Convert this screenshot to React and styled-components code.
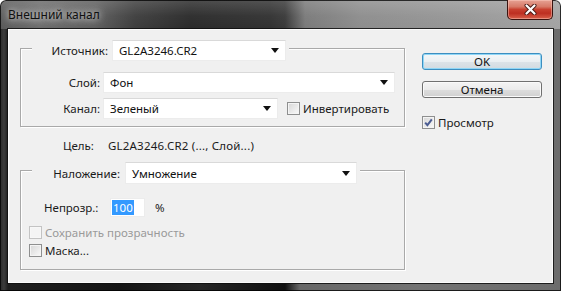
import React from 'react';
import styled, { createGlobalStyle } from 'styled-components';

const Global = createGlobalStyle`
  html, body { margin: 0; padding: 0; background: #ffffff; }
  body { font-family: "Noto Sans", "Open Sans", sans-serif; }
  #root { width: 561px; height: 291px; }
`;

const Window = styled.div`
  width: 561px;
  height: 291px;
  box-sizing: border-box;
  display: flex;
  flex-direction: column;
  border-radius: 6px 6px 0 0;
  overflow: hidden;
  background:
    linear-gradient(90deg, #2a2a2a 0px, #3c3c3c 4px, #1e1e1e 8px, #141414 120px, #262626 200px, #101010 285px, #686868 300px, #737373 420px, #6c6c6c 561px) bottom / 100% 262px no-repeat,
    linear-gradient(180deg, rgba(255,255,255,0.16) 0px, rgba(255,255,255,0.03) 16px, rgba(0,0,0,0) 29px),
    linear-gradient(90deg, #5a5a5a 0px, #6c6c6c 40px, #5e5e5e 95px, #3e3e3e 135px, #2b2b2b 190px, #323232 270px, #3a3a3a 285px, #7a7a7a 305px, #8d8d8d 360px, #979797 460px, #a3a3a3 561px);
  box-shadow: inset 0 0 0 1px rgba(0, 0, 0, 0.75);
`;

const TitleBar = styled.div`
  flex: none;
  height: 29px;
  box-sizing: border-box;
  padding: 0 8px;
  display: flex;
  align-items: flex-start;
  justify-content: space-between;
`;

const Title = styled.span`
  margin-top: 7px;
  font-size: 12px;
  line-height: 15px;
  color: #101010;
  text-shadow: 0 0 6px rgba(255, 255, 255, 0.85), 0 0 12px rgba(255, 255, 255, 0.6);
`;

const CloseButton = styled.div`
  width: 46px;
  height: 20px;
  box-sizing: border-box;
  border: 1px solid #3a1410;
  border-top: none;
  border-radius: 0 0 5px 5px;
  background: linear-gradient(180deg, #e6a294 0%, #d77a68 35%, #c8402f 50%, #bd2f22 70%, #d9604a 100%);
  box-shadow: inset 0 0 0 1px rgba(255, 210, 200, 0.45);
  display: flex;
  align-items: center;
  justify-content: center;
`;

const Client = styled.div`
  flex: none;
  margin: 0 8px;
  width: 545px;
  height: 254px;
  box-sizing: border-box;
  background: #f0f0f0;
  box-shadow: 0 0 0 1px rgba(15, 15, 15, 0.85), inset 1px 1px 0 #fbfbfb, inset -1px -1px 0 #fbfbfb;
  display: flex;
  align-items: flex-start;
  color: #1a1a1a;
  font-size: 11.5px;
`;

const LeftColumn = styled.div`
  flex: none;
  width: 397px;
  box-sizing: border-box;
  padding: 19px 0 0 12px;
  display: flex;
  flex-direction: column;
`;

const RightColumn = styled.div`
  flex: none;
  width: 120px;
  margin-left: 17px;
  padding-top: 24px;
  display: flex;
  flex-direction: column;
`;

const Group = styled.div`
  width: 385px;
  height: ${(p) => p.$h}px;
  margin-top: ${(p) => p.$mt || 0}px;
  box-sizing: border-box;
  border: 1px solid #a9a9a9;
  box-shadow: inset 1px 1px 0 #ffffff, 1px 1px 0 #ffffff;
  display: flex;
  flex-direction: column;
`;

const HeaderRow = styled.div`
  display: flex;
  align-items: stretch;
  margin-top: -9px;
  margin-left: 11px;
  align-self: flex-start;
`;

const HeaderLabel = styled.div`
  width: ${(p) => p.$w}px;
  box-sizing: border-box;
  padding-right: ${(p) => p.$pr}px;
  background: #f0f0f0;
  display: flex;
  align-items: center;
  justify-content: flex-end;
  white-space: nowrap;
`;

const HeaderGap = styled.div`
  width: 3px;
  background: #f0f0f0;
`;

const Row = styled.div`
  display: flex;
  align-items: center;
  margin-top: ${(p) => p.$mt || 0}px;
  margin-left: ${(p) => p.$ml || 0}px;
  height: ${(p) => p.$h || 16}px;
  white-space: nowrap;
`;

const Label = styled.div`
  width: ${(p) => p.$w}px;
  text-align: ${(p) => p.$align || 'right'};
  margin-right: ${(p) => p.$gap || 0}px;
  flex: none;
  white-space: nowrap;
`;

const Value = styled.span`
  letter-spacing: 0.2px;
`;

const SelectBox = styled.div`
  width: ${(p) => p.$w}px;
  height: ${(p) => p.$h || 21}px;
  box-sizing: border-box;
  background: #ffffff;
  border: 1px solid #ececec;
  border-top-color: #d9d9d9;
  display: flex;
  align-items: center;
  justify-content: space-between;
  padding: 0 6px 0 6px;
  flex: none;
  color: #111;
`;

const Arrow = () => (
  <svg width="8" height="5" viewBox="0 0 8 5">
    <path d="M0 0 H8 L4 5 Z" fill="#111" />
  </svg>
);

const Select = ({ w, h, children }) => (
  <SelectBox $w={w} $h={h}>
    <span>{children}</span>
    <Arrow />
  </SelectBox>
);

const CheckBoxBox = styled.div`
  width: 13px;
  height: 13px;
  box-sizing: border-box;
  flex: none;
  border: 1px solid ${(p) => (p.$disabled ? '#c3c3c3' : '#8e8f8f')};
  background: ${(p) =>
    p.$disabled
      ? '#f4f4f4'
      : 'linear-gradient(135deg, #d6d6d6 0%, #e8e8e8 50%, #fafafa 100%)'};
  box-shadow: inset 0 0 0 1px ${(p) => (p.$disabled ? '#f7f7f7' : '#f4f4f4')};
  display: flex;
  align-items: center;
  justify-content: center;
  margin-right: 3px;
`;

const Check = ({ checked, disabled }) => (
  <CheckBoxBox $disabled={disabled}>
    {checked && (
      <svg width="11" height="11" viewBox="0 0 11 11">
        <path d="M2.2 5.6 L4.4 8.2 L8.8 2.4" fill="none" stroke="#4a5c92" strokeWidth="2" />
      </svg>
    )}
  </CheckBoxBox>
);

const CheckText = styled.span`
  color: ${(p) => (p.$disabled ? '#9a9a9a' : '#1a1a1a')};
`;

const Input = styled.div`
  width: 35px;
  height: 19px;
  box-sizing: border-box;
  background: #ffffff;
  border: 1px solid #ececec;
  display: flex;
  align-items: center;
  padding-left: 1px;
  flex: none;
`;

const Selected = styled.span`
  background: #3399ff;
  color: #ffffff;
  padding: 0 1px;
  line-height: 15px;
`;

const Percent = styled.span`
  margin-left: 10px;
`;

const Button = styled.div`
  width: 120px;
  height: 17px;
  box-sizing: border-box;
  margin-top: ${(p) => p.$mt || 0}px;
  border: 1px solid ${(p) => (p.$default ? '#3c8ec0' : '#707070')};
  border-radius: 3px;
  background: ${(p) =>
    p.$default
      ? 'linear-gradient(180deg, #f4f7f9 0%, #eaeff2 50%, #dce3e8 52%, #d2dbe1 100%)'
      : 'linear-gradient(180deg, #f4f4f4 0%, #ebebeb 50%, #dddddd 52%, #d0d0d0 100%)'};
  box-shadow: inset 0 0 0 1px ${(p) => (p.$default ? '#8fd6f6' : '#fafafa')};
  display: flex;
  align-items: center;
  justify-content: center;
  color: #111;
  line-height: 15px;
`;

export default function App() {
  return (
    <>
      <Global />
      <Window>
        <TitleBar>
          <Title>Внешний канал</Title>
          <CloseButton>
            <svg width="13" height="11" viewBox="0 0 13 11">
              <path d="M2.5 1.5 L10.5 9.5 M10.5 1.5 L2.5 9.5" stroke="#4a1a14" strokeWidth="4" strokeLinecap="round" />
              <path d="M2.5 1.5 L10.5 9.5 M10.5 1.5 L2.5 9.5" stroke="#ffffff" strokeWidth="2.2" strokeLinecap="round" />
            </svg>
          </CloseButton>
        </TitleBar>
        <Client>
          <LeftColumn>
            <Group $h={79}>
              <HeaderRow>
                <HeaderLabel $w={80} $pr={4}>Источник:</HeaderLabel>
                <Select w={174}>GL2A3246.CR2</Select>
                <HeaderGap />
              </HeaderRow>
              <Row $mt={11} $h={21}>
                <Label $w={79} $gap={3}>Слой:</Label>
                <Select w={292}>Фон</Select>
              </Row>
              <Row $mt={5} $h={21}>
                <Label $w={79} $gap={3}>Канал:</Label>
                <Select w={175}>Зеленый</Select>
                <Row $ml={9}>
                  <Check />
                  <CheckText>Инвертировать</CheckText>
                </Row>
              </Row>
            </Group>
            <Row $mt={10} $ml={43}>
              <Label $w={45} $align="left">Цель:</Label>
              <Value>GL2A3246.CR2 (..., Слой...)</Value>
            </Row>
            <Group $h={100} $mt={17}>
              <HeaderRow>
                <HeaderLabel $w={93} $pr={5}>Наложение:</HeaderLabel>
                <Select w={232} h={22}>Умножение</Select>
                <HeaderGap />
              </HeaderRow>
              <Row $mt={14} $ml={23} $h={19}>
                <Label $w={64} $align="left" $gap={2}>Непрозр.:</Label>
                <Input>
                  <Selected>100</Selected>
                </Input>
                <Percent>%</Percent>
              </Row>
              <Row $mt={7} $ml={8}>
                <Check disabled />
                <CheckText $disabled>Сохранить прозрачность</CheckText>
              </Row>
              <Row $mt={2} $ml={8}>
                <Check />
                <CheckText>Маска...</CheckText>
              </Row>
            </Group>
          </LeftColumn>
          <RightColumn>
            <Button $default>OK</Button>
            <Button $mt={11}>Отмена</Button>
            <Row $mt={16}>
              <Check checked />
              <CheckText>Просмотр</CheckText>
            </Row>
          </RightColumn>
        </Client>
      </Window>
    </>
  );
}
